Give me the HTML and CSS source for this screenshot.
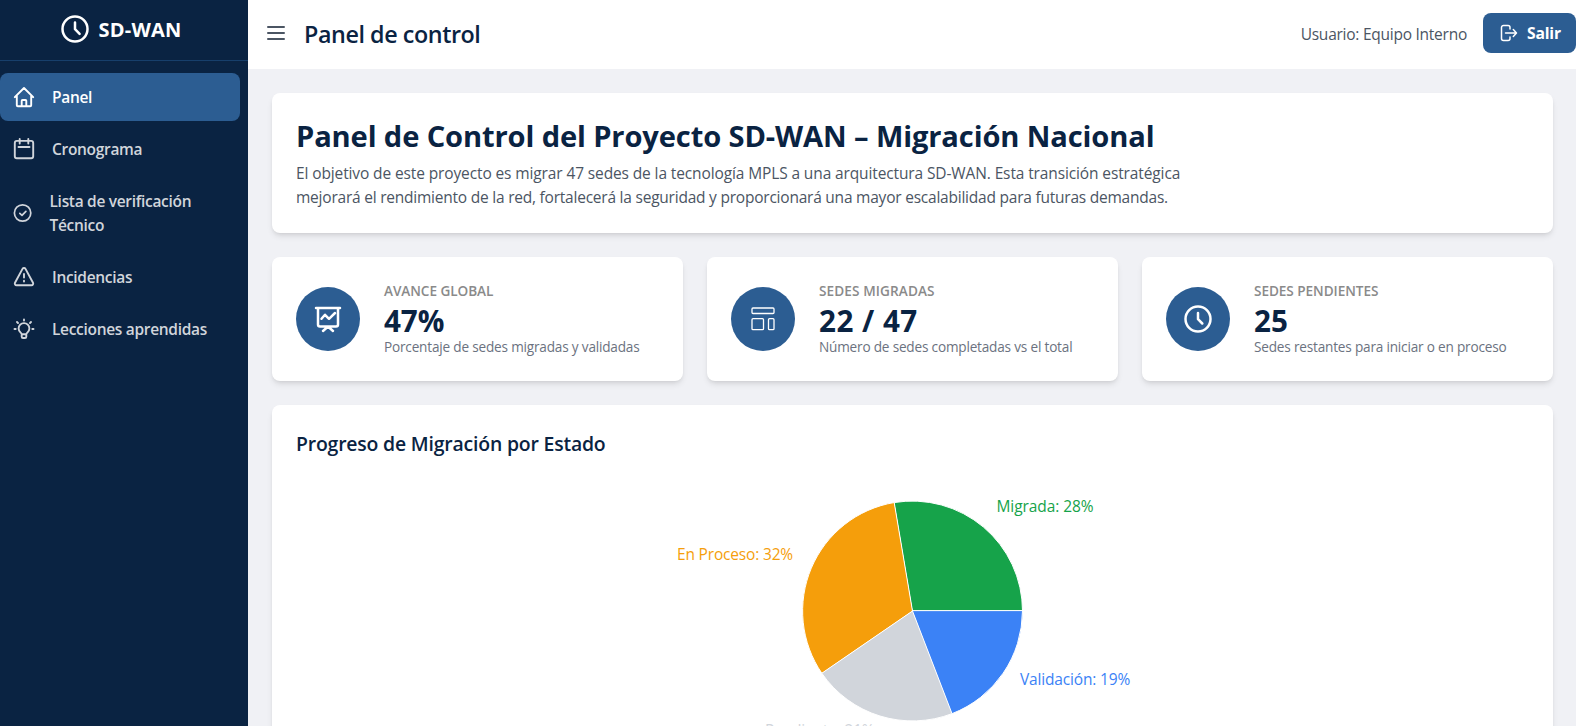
FILE: index.html
```html
<!DOCTYPE html>
<html lang="es">
<head>
<meta charset="utf-8">
<title>Panel de control</title>
<link rel="stylesheet" href="styles.css">
</head>
<body>
<div class="app">
  <aside class="sidebar">
    <div class="brand">
      <svg class="brand-icon" viewBox="0 0 32 32"><circle cx="16" cy="16" r="12.5"/><path d="M16 9.500v6.700l4.600 4.600"/></svg>
      <span>SD-WAN</span>
    </div>
    <nav class="nav">
      <a class="nav-item active">
        <svg viewBox="0 0 24 24"><path d="M2.800 12.200 12 3l9.200 9.200M4.800 10.500V20.200a1 1 0 0 0 1 1h12.400a1 1 0 0 0 1-1V10.500M9.700 21v-5.200a.8.800 0 0 1 .8-.8h3a.8.800 0 0 1 .8.800V21"/></svg>
        <span>Panel</span>
      </a>
      <a class="nav-item">
        <svg viewBox="0 0 24 24"><rect x="2.800" y="3.900" width="18.400" height="17.300" rx="2"/><path d="M7.700 2v4.500M16.300 2v4.500M6.500 10h11"/></svg>
        <span>Cronograma</span>
      </a>
      <a class="nav-item">
        <svg class="small" viewBox="0 0 22 22"><circle cx="10.600" cy="11" r="8.200"/><path d="m7.800 11.300 2.200 2 3.900-4"/></svg>
        <span class="wrapped">Lista de verificación Técnico</span>
      </a>
      <a class="nav-item">
        <svg viewBox="0 0 24 24"><path d="M10.500 3.900 3 17.800a1.700 1.700 0 0 0 1.500 2.500h15a1.700 1.700 0 0 0 1.500-2.500L13.500 3.900a1.700 1.700 0 0 0-3 0zM12 9v3.500M12 15.700v.8"/></svg>
        <span>Incidencias</span>
      </a>
      <a class="nav-item">
        <svg viewBox="0 0 24 24"><path d="M9.700 17.200c0-1.500-3.100-2.200-3.100-5.700a5.400 5.400 0 0 1 10.800 0c0 3.500-3.100 4.200-3.100 5.700zM9.700 17.500v2.200a1.300 1.300 0 0 0 1.300 1.300h2a1.300 1.300 0 0 0 1.300-1.300v-2.200M12 2.500v1M2.500 12h1.200M20.300 12h1.200M5 5l1 1M19 5l-1 1"/></svg>
        <span>Lecciones aprendidas</span>
      </a>
    </nav>
  </aside>

  <div class="main">
    <header class="topbar">
      <div class="topbar-left">
        <svg class="menu-icon" viewBox="0 0 24 24"><path d="M4 6h16M4 12h16M4 18h16"/></svg>
        <h2>Panel de control</h2>
      </div>
      <div class="topbar-right">
        <span class="user">Usuario: Equipo Interno</span>
        <button class="logout">
          <svg viewBox="0 0 20 20"><path d="M11 6V4.500a2 2 0 0 0-2-2H4.500a2 2 0 0 0-2 2v11a2 2 0 0 0 2 2H9a2 2 0 0 0 2-2V14M6.500 10h10.800M14.300 6.500l3.200 3.500-3.200 3.500"/></svg>
          <span>Salir</span>
        </button>
      </div>
    </header>

    <main class="content">
      <section class="card intro">
        <h1>Panel de Control del Proyecto SD-WAN – Migración Nacional</h1>
        <p>El objetivo de este proyecto es migrar 47 sedes de la tecnología MPLS a una arquitectura SD-WAN. Esta transición estratégica <span class="tight">mejorará el rendimiento de la red, fortalecerá la seguridad y proporcionará una mayor escalabilidad para futuras demandas.</span></p>
      </section>

      <section class="stats">
        <div class="card stat">
          <div class="stat-icon">
            <svg viewBox="0 0 32 32"><path d="M4 5h24M6 5v16.500a2 2 0 0 0 2 2h16a2 2 0 0 0 2-2V5M9.500 15.800l3.500-4 4 4L23 10M16 23.500l-5 4.500M16 23.500l5 4.500"/></svg>
          </div>
          <div>
            <div class="stat-label">AVANCE GLOBAL</div>
            <div class="stat-value narrow">47%</div>
            <div class="stat-note">Porcentaje de sedes migradas y validadas</div>
          </div>
        </div>
        <div class="card stat">
          <div class="stat-icon">
            <svg class="thin" viewBox="0 0 32 32"><rect x="5" y="5" width="22" height="5.500" rx="1"/><rect x="5" y="15.700" width="11.500" height="11" rx="1"/><rect x="21.500" y="15.700" width="5.500" height="11" rx="1"/></svg>
          </div>
          <div>
            <div class="stat-label wide">SEDES MIGRADAS</div>
            <div class="stat-value wide">22 / 47</div>
            <div class="stat-note">Número de sedes completadas vs el total</div>
          </div>
        </div>
        <div class="card stat">
          <div class="stat-icon">
            <svg viewBox="0 0 32 32"><circle cx="16" cy="16" r="12.500"/><path d="M16 10v6.200l4.300 4.300"/></svg>
          </div>
          <div>
            <div class="stat-label">SEDES PENDIENTES</div>
            <div class="stat-value">25</div>
            <div class="stat-note">Sedes restantes para iniciar o en proceso</div>
          </div>
        </div>
      </section>

      <section class="card chart-card">
        <h3>Progreso de Migración por Estado</h3>
        <svg class="pie" viewBox="0 0 1233 300">
          <g class="slices" transform="translate(616.500 138)">
            <path class="fill-done" d="M0 0H110A110 110 0 0 0-18.290-108.470Z"/>
            <path class="fill-progress" d="M0 0-18.290-108.470A110 110 0 0 0-90.690 62.260Z"/>
            <path class="fill-pending" d="M0 0-90.690 62.260A110 110 0 0 0 39.530 102.650Z"/>
            <path class="fill-check" d="M0 0 39.530 102.650A110 110 0 0 0 110 0Z"/>
          </g>
          <text class="fill-done" x="700.500" y="39">Migrada: 28%</text>
          <text class="fill-progress narrow" x="497" y="87" text-anchor="end">En Proceso: 32%</text>
          <text class="fill-pending narrow" x="578.500" y="262.500" text-anchor="end">Pendiente: 21%</text>
          <text class="fill-check narrow" x="724" y="212">Validación: 19%</text>
        </svg>
      </section>
    </main>
  </div>
</div>
</body>
</html>
```
FILE: styles.css
```css
* { box-sizing: border-box; }

body {
  margin: 0;
  height: 100vh;
  overflow: hidden;
  font: 15.5px/24px "Open Sans", "Noto Sans", sans-serif;
  color: #4b5563;
}

h1, h2, h3, p { margin: 0; }

svg {
  flex-shrink: 0;
  fill: none;
  stroke: currentColor;
  stroke-linecap: round;
  stroke-linejoin: round;
}

.app { display: flex; height: 100vh; overflow: hidden; background: #f0f1f5; }

.sidebar { width: 248px; flex-shrink: 0; background: #0a2342; color: #d1d5db; }

.brand {
  display: flex;
  align-items: center;
  justify-content: center;
  gap: 8px;
  height: 61px;
  padding: 0 8px 2px 0;
  border-bottom: 1px solid #173f6b;
  color: #fff;
  font-size: 20px;
  font-weight: 700;
  letter-spacing: 0.2px;
}
.brand span { padding-top: 1px; }
.brand-icon { width: 32px; height: 32px; stroke-width: 2.5; }

.nav { display: flex; flex-direction: column; gap: 4px; padding: 12px 8px 0 0; }

.nav-item {
  display: flex;
  align-items: center;
  gap: 16px;
  padding: 12px;
  border-radius: 8px;
  font-weight: 600;
  letter-spacing: -0.31px;
}
.nav-item svg { width: 24px; height: 24px; stroke-width: 1.9; }
.nav-item svg.small { width: 22px; height: 22px; margin-right: -0.5px; stroke-width: 1.7; }
.nav-item.active { background: #2c5d92; color: #fff; }
.wrapped { width: 160px; }

.main { flex: 1; min-width: 0; }

.topbar {
  display: flex;
  align-items: center;
  justify-content: space-between;
  height: 69px;
  padding-left: 16px;
  padding-bottom: 3px;
  background: #fff;
}
.topbar-left, .topbar-right { display: flex; align-items: center; gap: 16px; }
.topbar h2 {
  color: #0a2342;
  font-size: 23.3px;
  font-weight: 600;
  line-height: 32px;
  letter-spacing: -0.42px;
  padding-top: 2px;
}
.menu-icon { width: 24px; height: 24px; stroke-width: 2; }
.user { padding-top: 1px; letter-spacing: -0.25px; }
.logout {
  display: flex;
  align-items: center;
  gap: 8px;
  width: 93px;
  height: 40px;
  padding: 0 0 0 16px;
  border: 0;
  border-radius: 8px;
  background: #2c5d92;
  color: #fff;
  font: 700 15.7px/24px "Open Sans", "Noto Sans", sans-serif;
  letter-spacing: -0.2px;
}
.logout svg { width: 20px; height: 20px; stroke-width: 1.5; }

.content { display: flex; flex-direction: column; gap: 24px; padding: 24px 23px 0 24px; }

.card {
  padding: 24px;
  border-radius: 8px;
  background: #fff;
  box-shadow: 0 4px 6px -1px rgb(0 0 0 / 10%), 0 2px 4px -2px rgb(0 0 0 / 10%);
}

.intro h1 {
  padding-top: 1px;
  color: #0a2342;
  font-size: 29.1px;
  font-weight: 700;
  line-height: 36px;
  letter-spacing: -0.12px;
}
.intro p { width: 896px; margin-top: 7px; letter-spacing: -0.12px; }
.tight { letter-spacing: -0.225px; }

.stats { display: grid; grid-template-columns: repeat(3, 1fr); gap: 24px; }
.stat { display: flex; align-items: center; gap: 24px; }
.stat-icon {
  display: grid;
  place-items: center;
  width: 64px;
  height: 64px;
  border-radius: 50%;
  background: #2c5d92;
  color: #fff;
}
.stat-icon svg { width: 32px; height: 32px; stroke-width: 2.5; }
.stat-icon svg.thin { stroke-width: 1.3; }
.stat-label {
  color: #8a8a8a;
  font-size: 13.6px;
  font-weight: 600;
  line-height: 20px;
  letter-spacing: -0.06px;
}
.stat-label.wide { letter-spacing: 0.1px; }
.stat-value {
  height: 36px;
  padding-top: 1.5px;
  color: #0a2342;
  font-size: 29.6px;
  font-weight: 700;
  line-height: 36px;
}
.stat-value.wide { letter-spacing: 0.5px; }
.stat-value.narrow { letter-spacing: -0.1px; }
.stat-note { color: #6b7280; font-size: 13.6px; line-height: 20px; letter-spacing: -0.19px; }

.chart-card { height: 400px; }
.chart-card h3 {
  padding-top: 1px;
  color: #0a2342;
  font-size: 19.4px;
  font-weight: 600;
  line-height: 28px;
  letter-spacing: -0.18px;
}
.pie { display: block; width: 1233px; height: 300px; margin-top: 15px; overflow: visible; }
.pie text { stroke: none; font-size: 15.5px; letter-spacing: -0.08px; }
.pie text.narrow { letter-spacing: -0.17px; }
.slices path { stroke: #fff; stroke-width: 1; }
.fill-done { fill: #16a34a; }
.fill-progress { fill: #f59e0b; }
.fill-pending { fill: #d1d5db; }
.fill-check { fill: #3b82f6; }
```
